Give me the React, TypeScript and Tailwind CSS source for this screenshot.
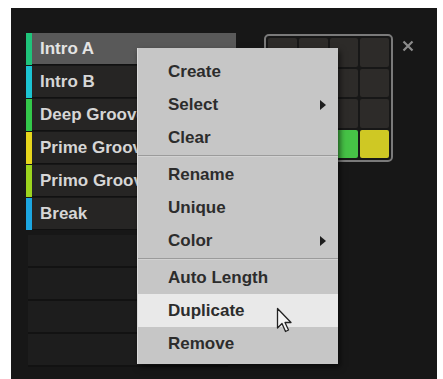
import React from 'react';

const clips = [
  { name: 'Intro A', color: 'bg-[#1fc47a]', active: true },
  { name: 'Intro B', color: 'bg-[#1cc4d2]' },
  { name: 'Deep Groove', color: 'bg-[#33c84a]' },
  { name: 'Prime Groove', color: 'bg-[#e6d61c]' },
  { name: 'Primo Groove', color: 'bg-[#9cd41e]' },
  { name: 'Break', color: 'bg-[#1ca6e0]' },
];

const menuGroups = [
  [{ label: 'Create' }, { label: 'Select', sub: true }, { label: 'Clear' }],
  [{ label: 'Rename' }, { label: 'Unique' }, { label: 'Color', sub: true }],
  [{ label: 'Auto Length' }, { label: 'Duplicate', hover: true }, { label: 'Remove' }],
];

const padColors = [
  '', '', '', '',
  '', '', '', '',
  '', '', '', '',
  '', '', 'bg-[#46c246]', 'bg-[#cfc824]',
];

const Cursor = () => (
  <svg width="20" height="28" viewBox="0 0 20 28" className="absolute left-[138px] top-[259px]">
    <path
      d="M1.5 1.5 L1.5 21 L6 16.5 L9.5 24.5 L12.5 23 L9 15.5 L15 15.5 Z"
      fill="#f4f4f4"
      stroke="#222"
      strokeWidth="1.3"
      strokeLinejoin="round"
    />
  </svg>
);

export default function App() {
  return (
    <div
      className="w-[443px] h-[379px] bg-white overflow-hidden"
      style={{ fontFamily: '"Liberation Sans", Arial, sans-serif' }}
    >
      <div className="relative ml-[11px] mt-[8px] w-[426px] h-[371px] bg-[#171717] flex">
        {/* clip list */}
        <div className="w-[225px] shrink-0 flex flex-col pl-[15px] pt-[25px]">
          {clips.map((c) => (
            <div key={c.name} className="flex h-[33px] pb-px">
              <div className={`w-[6px] ${c.color}`} />
              <div
                className={`w-[204px] flex items-center pl-[8px] text-[17px] font-bold whitespace-nowrap overflow-hidden border-b border-[#111] ${
                  c.active ? 'bg-[#595959] text-[#e4e4e4]' : 'bg-[#262524] text-[#d6d6d6]'
                }`}
              >
                {c.name}
              </div>
            </div>
          ))}
          <div className="flex flex-col ml-[2px] mt-[4px]">
            {[0, 1, 2, 3].map((i) => (
              <div key={i} className="w-[200px] h-[33px] bg-[#1d1d1d] border-b-[2px] border-[#121212]" />
            ))}
          </div>
        </div>

        {/* pad grid */}
        <div className="ml-[28px] mt-[26px] flex items-start">
          <div className="w-[129px] h-[128px] rounded-[5px] border-2 border-[#7a7a7a] p-[2px] grid grid-cols-4 gap-[2px]">
            {padColors.map((p, i) => (
              <div key={i} className={`rounded-[2px] ${p || 'bg-[#2d2b29]'}`} />
            ))}
          </div>
          <svg width="12" height="12" viewBox="0 0 12 12" className="ml-[9px] mt-[6px]">
            <path d="M1.5 1.5 L10.5 10.5 M10.5 1.5 L1.5 10.5" stroke="#8c8c8c" strokeWidth="2.2" />
          </svg>
        </div>

        {/* context menu */}
        <div className="absolute left-[126px] top-[40px] w-[201px] bg-[#c6c6c6] pt-[7px] pb-[4px] border-l border-[#dadada] shadow-[2px_3px_6px_rgba(0,0,0,0.6)]">
          {menuGroups.map((g, gi) => (
            <div key={gi}>
              {gi > 0 && (
                <div className="h-[4px] flex flex-col justify-center">
                  <div className="h-px bg-[#9b9b9b]" />
                  <div className="h-px bg-[#d2d2d2]" />
                </div>
              )}
              {g.map((item) => (
                <div
                  key={item.label}
                  className={`h-[33px] flex items-center pl-[30px] pr-[12px] text-[17px] font-bold text-[#2c2c2c] ${
                    item.hover ? 'bg-[#e9e9e9]' : ''
                  }`}
                >
                  <span className="flex-1">{item.label}</span>
                  {item.sub && (
                    <svg width="6" height="10" viewBox="0 0 6 10">
                      <path d="M0 0 L6 5 L0 10 Z" fill="#1e1e1e" />
                    </svg>
                  )}
                </div>
              ))}
            </div>
          ))}
          <Cursor />
        </div>
      </div>
    </div>
  );
}
